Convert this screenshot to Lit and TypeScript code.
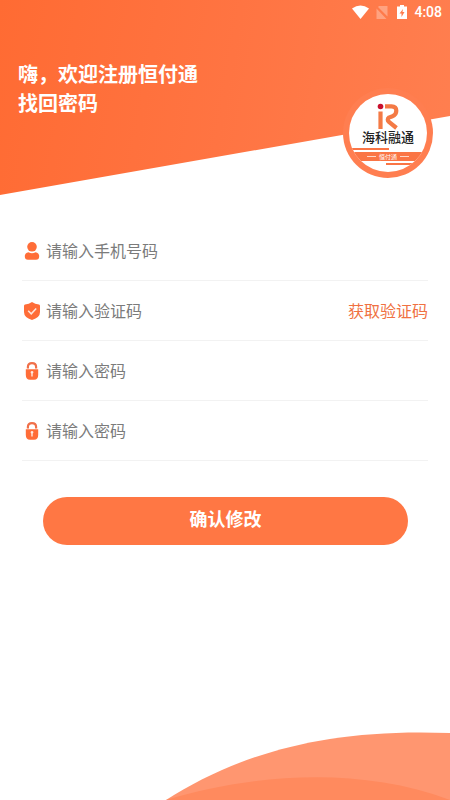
import { LitElement, html, css, svg } from "lit";
import { customElement, property } from "lit/decorators.js";

const icons = {
  user: svg`
    <circle cx="8" cy="4.800" r="4.800" />
    <path d="M4.500 10.200Q8 12.400 11.500 10.200Q15.200 11 15.200 14.200Q15.200 17.800 12 17.800H4Q.8 17.800 .8 14.200Q.8 11 4.500 10.200Z" />`,
  shield: svg`
    <path d="M8 0Q11 2.400 15 2.600Q16 2.700 16 4V10Q16 15.600 8 18Q0 15.600 0 10V4Q0 2.700 1 2.600Q5 2.400 8 0Z" />
    <path class="tick" d="M4.200 8.800L7.200 11.800L12.200 6.400" />`,
  lock: svg`
    <path class="shackle" d="M3.900 6.500V5Q3.900 1.200 8 1.200Q12.100 1.200 12.100 5V6.500" />
    <path d="M1.800 7.200H14.200V13Q14.200 17.800 10 17.800H6Q1.800 17.800 1.800 13Z" />
    <path class="hole" d="M6.600 10.300A1.400 1.400 0 1 1 8.700 11.500V14.600H7.300V11.500A1.400 1.400 0 0 1 6.600 10.300Z" />`,
};

@customElement("form-row")
class FormRow extends LitElement {
  @property() icon: keyof typeof icons = "user";
  @property() label = "";
  @property() type = "text";

  static styles = css`
    :host {
      display: flex;
      align-items: center;
      height: 59px;
      border-bottom: 1px solid #f2f2f2;
    }
    svg {
      flex: none;
      width: 16px;
      height: 18px;
      margin: 0 6px 0 2px;
      fill: #ff6d38;
    }
    .tick {
      fill: none;
      stroke: #ffe6dc;
      stroke-width: 1.5;
    }
    .shackle {
      fill: none;
      stroke: #f0704a;
      stroke-width: 2.2;
    }
    .hole {
      fill: #ffe9e0;
    }
    input {
      flex: 1;
      min-width: 0;
      height: 40px;
      padding: 0 0 2px;
      border: 0;
      outline: 0;
      background: none;
      color: #333;
      font: 16px "Noto Sans CJK SC", sans-serif;
    }
    input::placeholder {
      color: #7b7b7b;
      opacity: 1;
    }
  `;

  render() {
    return html`
      <svg viewBox="0 0 16 18" aria-hidden="true">${icons[this.icon]}</svg>
      <input type=${this.type} aria-label=${this.label} placeholder=${this.label} />
      <slot></slot>
    `;
  }
}

@customElement("app-root")
class AppRoot extends LitElement {
  static styles = css`
    :host {
      display: flex;
      flex-direction: column;
      min-height: 100vh;
      background: #fff;
      font-family: "Noto Sans CJK SC", sans-serif;
    }
    header {
      position: relative;
      height: 195px;
      color: #fff;
    }
    .backdrop {
      position: absolute;
      inset: 0;
      background: linear-gradient(100deg, #ff6b33, #ff7442 50%, #ff7f50);
      clip-path: polygon(0 0, 100% 0, 100% 116px, 0 100%);
    }
    .status {
      position: relative;
      display: flex;
      justify-content: flex-end;
      align-items: center;
      height: 24px;
      padding-right: 8px;
      font: 500 14px "Roboto", sans-serif;
    }
    .status svg {
      width: 56px;
      height: 14px;
      margin-right: 6px;
    }
    h1 {
      position: relative;
      margin: 35px 0 0 18px;
      font-size: 20px;
      line-height: 29px;
      font-weight: 700;
    }
    .badge {
      position: absolute;
      right: 17px;
      bottom: 17px;
      width: 90px;
      height: 90px;
    }
    .brand {
      font: 500 13px "Noto Sans CJK SC", sans-serif;
      fill: #222;
    }
    .product {
      font: 6px "Noto Sans CJK SC", sans-serif;
      fill: #fff;
    }
    form {
      display: flex;
      flex-direction: column;
      margin-top: 26px;
      padding: 0 22px;
    }
    button {
      padding: 0;
      border: 0;
      cursor: pointer;
      font-family: inherit;
    }
    .code {
      padding-bottom: 2px;
      background: none;
      color: #f07142;
      font-size: 16px;
      line-height: 24px;
    }
    .submit {
      height: 48px;
      margin: 36px 20px 0 21px;
      padding-bottom: 6px;
      border-radius: 24px;
      background: #ff7744;
      color: #fff;
      font-size: 18px;
      font-weight: 700;
    }
    .hill {
      display: block;
      width: 64%;
      margin: auto 0 0 auto;
    }
  `;

  render() {
    return html`
      <header>
        <div class="backdrop"></div>
        <div class="status">
          <svg viewBox="0 0 56 14" aria-hidden="true">
            <path fill="#fff" d="M0 3.500Q8.500-2.500 17 3.500L8.500 14Z" />
            <path fill="#fff" opacity=".3" d="M27 1H35.500V11.500L26 2ZM24.500 3.500L34.500 14H24.500Z" />
            <path fill="#fff" fill-rule="evenodd" d="M48 0H52V1.500H55V14H45V1.500H48ZM51 4L47.500 8.500H49.500V12L52.500 7H50.500Z" />
          </svg>
          <span>4:08</span>
        </div>
        <h1>嗨，欢迎注册恒付通<br />找回密码</h1>
        <svg class="badge" viewBox="0 0 90 90" role="img" aria-label="海科融通 恒付通">
          <defs>
            <clipPath id="disc"><circle cx="45" cy="45" r="39" /></clipPath>
          </defs>
          <circle cx="45" cy="45" r="45" fill="#ff7e50" />
          <circle cx="45" cy="45" r="39" fill="#fff" />
          <circle cx="37.500" cy="18.500" r="2.800" fill="#c8102e" />
          <g fill="none" stroke="#f47a45" stroke-width="4.200">
            <path d="M37.500 23.500V41" />
            <path d="M42 18.300H48.500Q53.300 18.300 53.300 22.800Q53.300 27 49.500 28.200L46 29.500Q43.500 31.500 46 34L53.500 40" />
          </g>
          <text class="brand" x="45" y="54" text-anchor="middle">海科融通</text>
          <g clip-path="url(#disc)" fill="#fa7545">
            <rect x="6" y="60" width="40" height="2" />
            <rect x="6" y="64" width="78" height="9" />
            <rect x="43" y="75" width="40" height="2" />
          </g>
          <path stroke="#fff" stroke-width=".7" d="M24 68.500H33M57 68.500H66" />
          <text class="product" x="45" y="71" text-anchor="middle">恒付通</text>
        </svg>
      </header>
      <form @submit=${(e: Event) => e.preventDefault()}>
        <form-row icon="user" label="请输入手机号码" type="tel"></form-row>
        <form-row icon="shield" label="请输入验证码">
          <button class="code" type="button">获取验证码</button>
        </form-row>
        <form-row icon="lock" label="请输入密码" type="password"></form-row>
        <form-row icon="lock" label="请输入密码" type="password"></form-row>
        <button class="submit">确认修改</button>
      </form>
      <svg class="hill" viewBox="0 0 288 70" aria-hidden="true">
        <path fill="#ff9670" d="M4 70C75 25 160 -2 288 3V70Z" />
        <path fill="#ff8a5e" d="M4 70C80 47 190 33 288 70Z" />
      </svg>
    `;
  }
}
